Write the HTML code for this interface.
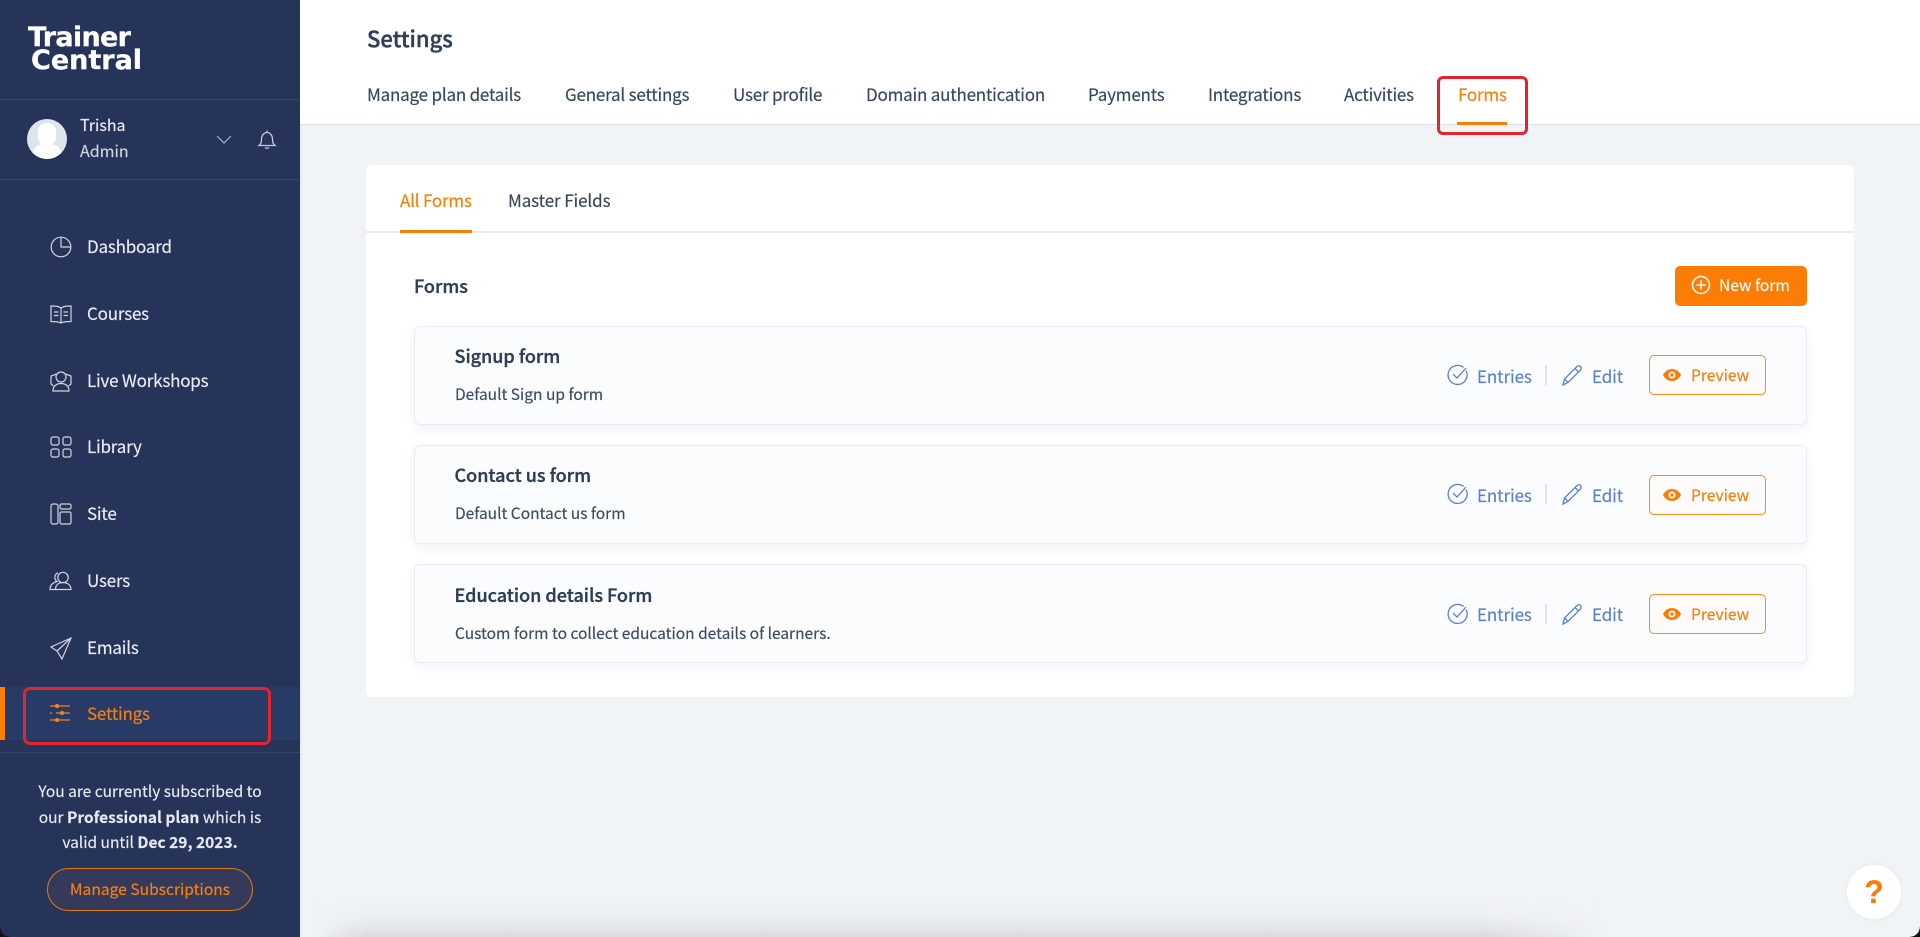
<!DOCTYPE html>
<html lang="en"><head><meta charset="utf-8"><title>Settings</title>
<style>
*{box-sizing:border-box}
html,body{margin:0;padding:0;width:1920px;height:937px;overflow:hidden;background:#f1f4f6}
body{position:relative;font-family:"Noto Sans CJK SC","Noto Sans CJK JP","Liberation Sans",sans-serif;color:#2f4057;-webkit-text-stroke:.15px}
.a{position:absolute;white-space:nowrap}
.t{position:absolute;white-space:nowrap;line-height:30px;height:30px}
svg{position:absolute;overflow:visible;fill:none}
.nav{font-size:17px;letter-spacing:-.2px;color:#e9ecf2;left:87px}
.nic{stroke:#cfd4df;stroke-width:1.2;left:50px;width:22px;height:22px}
.tab{font-size:17px;letter-spacing:-.2px;top:79px;color:#35465d}
.row{position:absolute;left:414px;width:1393px;height:99px;background:#fbfcfd;border:1.5px solid #e8ecf1;border-radius:6px;box-shadow:0 4px 10px rgba(60,80,110,.07)}
.rt{font-size:18px;font-weight:500;left:454.500px;color:#2c3d54;-webkit-text-stroke:.35px}
.rd{font-size:15.5px;left:455px;color:#3b4b62}
.bl{font-size:17px;letter-spacing:-.1px;color:#5a80cf}
.ib{stroke:#5a80cf;stroke-width:1.3;width:22px;height:22px}
.pv{position:absolute;left:1649px;width:117px;height:40px;border:1.5px solid #fb8c1e;border-radius:5px;background:#fdfbf9}
.pt{font-size:15.6px;color:#f97c0a;left:1691px}
.sep{position:absolute;left:1545px;width:1.5px;height:20px;background:#dfe5ec}
</style></head><body>

<div class="a" style="left:0;top:0;width:300px;height:937px;background:#26345a"></div>
<div class="a" style="left:0;top:99px;width:300px;height:1px;background:#354468"></div>
<div class="a" style="left:0;top:179px;width:300px;height:1px;background:#354468"></div>

<div class="a" style="left:28px;top:22px;font:bold 27px/31px 'DejaVu Sans',sans-serif;color:#fff;letter-spacing:-.7px;-webkit-text-stroke:.3px">Trainer</div>
<div class="a" style="left:31px;top:45px;font:bold 27px/31px 'DejaVu Sans',sans-serif;color:#fff;letter-spacing:0;-webkit-text-stroke:.3px">Central</div>

<div class="a" style="left:27px;top:119px;width:40px;height:40px;border-radius:50%;background:#dfe3ec;overflow:hidden">
<div class="a" style="left:11px;top:4px;width:18px;height:23px;border-radius:9px 9px 10px 10px;background:#fff"></div>
<div class="a" style="left:5px;top:25px;width:30px;height:15px;border-radius:12px 12px 0 0;background:#fff"></div></div>
<div class="t" style="left:80px;top:109px;font-size:16px;color:#e9ecf2">Trisha</div>
<div class="t" style="left:80px;top:135px;font-size:16px;color:#d0d5e0">Admin</div>
<svg style="left:216px;top:134px;width:16px;height:10px;stroke:#aeb6c7;stroke-width:1.2"><path d="M1 2l7 7 7-7"/></svg>
<svg style="left:257px;top:129px;width:20px;height:22px;stroke:#c4cad7;stroke-width:1.3"><path d="M2 16.500c2-1.500 2.500-3 2.500-6.500 0-3.500 2.500-6.500 5.500-6.500s5.500 3 5.500 6.500c0 3.500.5 5 2.500 6.500zM10 3.500V1.500M8 18.500c.5 1 3.500 1 4 0"/></svg>

<svg class="nic" style="top:236px" viewBox="0 0 22 22"><circle cx="11" cy="11" r="9.800"/><path d="M11 1.200V11h9.800"/></svg>
<div class="t nav" style="top:231px">Dashboard</div>
<svg class="nic" style="top:303px" viewBox="0 0 22 22"><path d="M1 3c4 0 7 0 10 2 3-2 6-2 10-2v15.500c-4 0-7 0-10 1.500-3-1.500-6-1.500-10-1.500zM11 5v15M4 9h4.500M4 12.500h4.500M13.500 9H18M13.500 12.500H18"/></svg>
<div class="t nav" style="top:298px">Courses</div>
<svg class="nic" style="top:370px" viewBox="0 0 22 22"><circle cx="11" cy="7" r="5"/><path d="M3 21c0-5 3.500-7.500 8-7.500s8 2.500 8 7.500zM6.500 4L1 6v8l2.500 2M15.500 4L21 6v8l-2.500 2"/></svg>
<div class="t nav" style="top:365px">Live Workshops</div>
<svg class="nic" style="top:436px" viewBox="0 0 22 22"><rect x="1" y="1" width="8" height="8" rx="2"/><rect x="13" y="1" width="8" height="8" rx="2"/><rect x="1" y="13" width="8" height="8" rx="2"/><rect x="13" y="13" width="8" height="8" rx="2"/></svg>
<div class="t nav" style="top:431px">Library</div>
<svg class="nic" style="top:503px" viewBox="0 0 22 22"><rect x="1" y="1" width="7" height="20" rx="2"/><rect x="10" y="1" width="11" height="5" rx="1.500"/><rect x="10" y="9" width="11" height="12" rx="1.500"/></svg>
<div class="t nav" style="top:498px">Site</div>
<svg class="nic" style="top:570px" viewBox="0 0 22 22"><circle cx="13" cy="7.500" r="5.200"/><path d="M5.500 19.500c0-4.500 3-7 7.500-7s8 2.500 8 7zM8 2.800a5 5 0 0 0-1 8.700C3 12.500 0 15 0 19.500h5.500"/></svg>
<div class="t nav" style="top:565px">Users</div>
<svg class="nic" style="top:637px" viewBox="0 0 22 22"><path d="M21 1L1 10l6 4 5 8zM21 1L7 14M21 1l-9 21"/></svg>
<div class="t nav" style="top:632px">Emails</div>

<div class="a" style="left:0;top:687px;width:300px;height:53px;background:#283a66"></div>
<div class="a" style="left:0;top:687px;width:5px;height:53px;background:#fb8005"></div>
<svg style="left:50px;top:703px;width:22px;height:22px;stroke:#f48417;stroke-width:1.3"><path d="M0 3h20M0 10h2M6 10h14M0 17h20" /><path d="M7 3h.1M12 10h.1M7 17h.1" stroke-width="4" stroke-linecap="round"/></svg>
<div class="t nav" style="top:698px;color:#f5820f">Settings</div>
<div class="a" style="left:23px;top:687px;width:248px;height:58px;border:3px solid #e3242c;border-radius:7px"></div>
<div class="a" style="left:0;top:752px;width:300px;height:1px;background:#36456a"></div>

<div class="a" style="left:0;top:779px;width:300px;text-align:center;font-size:15.500px;line-height:25.500px;color:#e6e9ef">You are currently subscribed to<br>our <b style="font-weight:700">Professional plan</b> which is<br>valid until <b style="font-weight:700">Dec 29, 2023.</b></div>
<div class="a" style="left:47px;top:868px;width:206px;height:43px;border:1.500px solid #e2790f;border-radius:22px;background:#353a5a;text-align:center;line-height:40px;font-size:15.600px;color:#f5820f">Manage Subscriptions</div>
<div class="a" style="left:0;top:927px;width:10px;height:10px;background:radial-gradient(circle at 100% 0,transparent 9.500px,#111 10px)"></div>

<div class="a" style="left:300px;top:0;width:2px;height:937px;background:#e6eaf2"></div>
<div class="a" style="left:300px;top:0;width:1620px;height:125px;background:#fff;border-bottom:1.500px solid #dde3ea"></div>

<div class="a" style="left:367px;top:20px;line-height:36px;font-size:22px;font-weight:500;color:#2f4057;-webkit-text-stroke:.4px">Settings</div>
<div class="t tab" style="left:367px">Manage plan details</div>
<div class="t tab" style="left:565px">General settings</div>
<div class="t tab" style="left:733px">User profile</div>
<div class="t tab" style="left:866px">Domain authentication</div>
<div class="t tab" style="left:1088px">Payments</div>
<div class="t tab" style="left:1208px">Integrations</div>
<div class="t tab" style="left:1344px">Activities</div>
<div class="t tab" style="left:1458px;color:#fb7d06">Forms</div>
<div class="a" style="left:1457px;top:122px;width:50px;height:3px;background:#fb7d06"></div>
<div class="a" style="left:1437px;top:76px;width:91px;height:59px;border:3px solid #e3242c;border-radius:6px"></div>

<div class="a" style="left:366px;top:165px;width:1488px;height:532px;background:#fff;border-radius:6px"></div>
<div class="a" style="left:366px;top:231px;width:1488px;height:1.500px;background:#e8ecf0"></div>
<div class="t" style="left:400px;top:185px;font-size:17px;letter-spacing:-.2px;color:#fb7d06">All Forms</div>
<div class="a" style="left:400px;top:230px;width:72px;height:2.500px;background:#fb7d06"></div>
<div class="t" style="left:508px;top:185px;font-size:17px;letter-spacing:-.1px;color:#35465d">Master Fields</div>

<div class="t" style="left:414px;top:271px;font-size:18px;font-weight:500;color:#2f4057;-webkit-text-stroke:.35px">Forms</div>
<div class="a" style="left:1675px;top:266px;width:132px;height:40px;border-radius:5px;background:#fb7d06"></div>
<svg style="left:1691px;top:275px;width:20px;height:20px;stroke:#fff;stroke-width:1.500"><circle cx="10" cy="10" r="8.500"/><path d="M10 5.500v9M5.500 10h9"/></svg>
<div class="t" style="left:1719px;top:270px;font-size:15.600px;color:#fff">New form</div>

<div class="row" style="top:326px"></div>
<div class="row" style="top:445px"></div>
<div class="row" style="top:564px"></div>

<div class="t rt" style="top:341px">Signup form</div><div class="t rd" style="top:379px">Default Sign up form</div>
<div class="t rt" style="top:460px">Contact us form</div><div class="t rd" style="top:498px">Default Contact us form</div>
<div class="t rt" style="top:580px">Education details Form</div><div class="t rd" style="top:618px">Custom form to collect education details of learners.</div>

<svg class="ib" style="left:1447px;top:364px"><path d="M19 6.500a9.500 9.500 0 1 1-2.500-3M6 10l4 4 9-10"/></svg>
<div class="t bl" style="left:1477px;top:361px">Entries</div><div class="sep" style="top:365px"></div>
<svg class="ib" style="left:1562px;top:364px"><path d="M1 21l1.500-6L15 2.500q2-1.500 3.500 0t0 3.500L6 18.500zM2.500 15L6 18.500M13 4.500L17 8.500"/></svg>
<div class="t bl" style="left:1592px;top:361px">Edit</div>
<div class="pv" style="top:355px"></div>
<svg style="left:1663px;top:369px;width:18px;height:12px"><path fill="#f97c0a" fill-rule="evenodd" d="M0 6C2 2 5.500 0 9 0s7 2 9 6c-2 4-5.500 6-9 6S2 10 0 6zm9-3.500a3.500 3.500 0 1 0 0 7 3.500 3.500 0 0 0 0-7zM9 4.300a1.700 1.700 0 1 1 0 3.400 1.700 1.700 0 0 1 0-3.400z"/></svg>
<div class="t pt" style="top:360px">Preview</div>

<svg class="ib" style="left:1447px;top:483px"><path d="M19 6.500a9.500 9.500 0 1 1-2.500-3M6 10l4 4 9-10"/></svg>
<div class="t bl" style="left:1477px;top:480px">Entries</div><div class="sep" style="top:484px"></div>
<svg class="ib" style="left:1562px;top:483px"><path d="M1 21l1.500-6L15 2.500q2-1.500 3.500 0t0 3.500L6 18.500zM2.500 15L6 18.500M13 4.500L17 8.500"/></svg>
<div class="t bl" style="left:1592px;top:480px">Edit</div>
<div class="pv" style="top:475px"></div>
<svg style="left:1663px;top:489px;width:18px;height:12px"><path fill="#f97c0a" fill-rule="evenodd" d="M0 6C2 2 5.500 0 9 0s7 2 9 6c-2 4-5.500 6-9 6S2 10 0 6zm9-3.500a3.500 3.500 0 1 0 0 7 3.500 3.500 0 0 0 0-7zM9 4.300a1.700 1.700 0 1 1 0 3.400 1.700 1.700 0 0 1 0-3.400z"/></svg>
<div class="t pt" style="top:480px">Preview</div>

<svg class="ib" style="left:1447px;top:603px"><path d="M19 6.500a9.500 9.500 0 1 1-2.500-3M6 10l4 4 9-10"/></svg>
<div class="t bl" style="left:1477px;top:599px">Entries</div><div class="sep" style="top:604px"></div>
<svg class="ib" style="left:1562px;top:603px"><path d="M1 21l1.500-6L15 2.500q2-1.500 3.500 0t0 3.500L6 18.500zM2.500 15L6 18.500M13 4.500L17 8.500"/></svg>
<div class="t bl" style="left:1592px;top:599px">Edit</div>
<div class="pv" style="top:594px"></div>
<svg style="left:1663px;top:608px;width:18px;height:12px"><path fill="#f97c0a" fill-rule="evenodd" d="M0 6C2 2 5.500 0 9 0s7 2 9 6c-2 4-5.500 6-9 6S2 10 0 6zm9-3.500a3.500 3.500 0 1 0 0 7 3.500 3.500 0 0 0 0-7zM9 4.300a1.700 1.700 0 1 1 0 3.400 1.700 1.700 0 0 1 0-3.400z"/></svg>
<div class="t pt" style="top:599px">Preview</div>

<div class="a" style="left:315px;top:897px;width:1290px;height:40px;background:linear-gradient(to top,#d9dbde 0,#e3e5e8 22%,#ecEff1 50%,#f1f4f6 100%);-webkit-mask-image:linear-gradient(to right,transparent 0,#000 50px,#000 1170px,transparent 100%);mask-image:linear-gradient(to right,transparent 0,#000 50px,#000 1170px,transparent 100%)"></div>

<div class="a" style="left:1847px;top:865px;width:54px;height:54px;border-radius:50%;background:#fff;box-shadow:0 0 6px rgba(0,0,0,.05);text-align:center;font:bold 32px/54px 'Liberation Sans',sans-serif;color:#fb7d06">?</div>
<div class="a" style="left:1910px;top:927px;width:10px;height:10px;background:radial-gradient(circle at 0 0,transparent 9.500px,#111 10px)"></div>
</body></html>
